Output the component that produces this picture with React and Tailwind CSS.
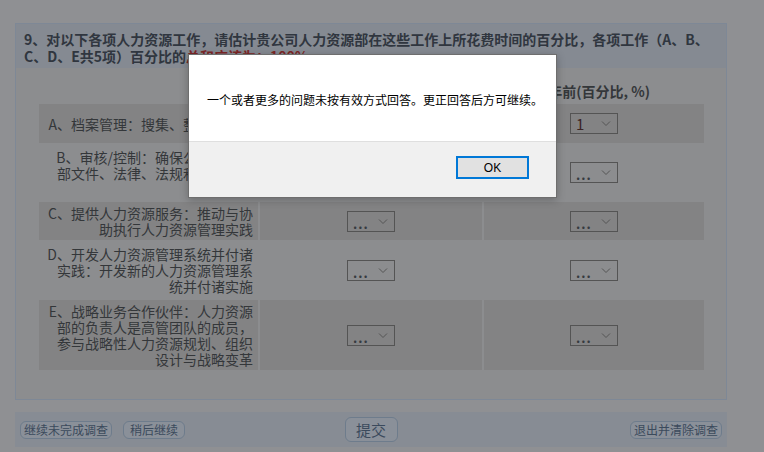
import React from "react";

const font = { fontFamily: '"Noto Sans CJK SC", "Liberation Sans", sans-serif' };

function Sel({ value = "...", red = false }) {
  return (
    <div className="relative w-[48px] h-[21px] border border-[#545454] flex items-end">
      <span
        className={
          red
            ? "pl-[5px] pb-[1px] text-[15px] leading-[17px] text-[#3b2424]"
            : "pl-[5px] pb-[0px] text-[13px] leading-[14px] text-[#353a40] font-bold tracking-[1px]"
        }
      >
        {value}
      </span>
      <svg className="absolute right-[6px] top-[6px]" width="10" height="7" viewBox="0 0 10 7">
        <path d="M1 1.5 L5 5.5 L9 1.5" fill="none" stroke="#555" strokeWidth="1" />
      </svg>
    </div>
  );
}

function Row({ h, shaded, lines, a = false }) {
  const bg = shaded ? "bg-[#838384]" : "bg-transparent";
  return (
    <div className={`grid grid-cols-[219px_222px_220px] gap-x-[2px] ${h}`}>
      <div className={`${bg} flex items-center justify-end pr-[5px]`}>
        <div className="text-right text-[14px] leading-[16px] text-[#34373a]">
          {lines.map((l, i) => (
            <div key={i} className="whitespace-nowrap">{l}</div>
          ))}
        </div>
      </div>
      <div className={`${bg} flex items-center justify-center`}>
        <Sel />
      </div>
      <div className={`${bg} flex items-center justify-center`}>
        {a ? <Sel value="1" red /> : <Sel />}
      </div>
    </div>
  );
}

function Btn({ children, w }) {
  return (
    <div
      className={`${w} h-[18px] rounded-[6px] border border-[#6e7c8c] bg-[#8a9099] flex items-center justify-center text-[12px] leading-[12px] text-[#3b4a5c]`}
    >
      {children}
    </div>
  );
}

export default function App() {
  return (
    <div className="relative w-[764px] h-[452px] overflow-hidden bg-[#8f9093]" style={font}>
      <div className="pt-[23px] pl-[15px]">
        <div className="w-[712px] h-[377px] border border-[#7e8896] bg-[#8c8d8f] flex flex-col">
          <div className="h-[44px] bg-[#858a92] px-[8px] pt-[7px] text-[14px] leading-[17px] font-bold text-[#30363f]">
            <div className="whitespace-nowrap">
              9、对以下各项人力资源工作，请估计贵公司人力资源部在这些工作上所花费时间的百分比，各项工作（A、B、
            </div>
            <div className="whitespace-nowrap">
              C、D、E共5项）百分比的<span className="text-[#7d2626]">总和应该为：100%</span>
            </div>
          </div>
          <div className="pl-[23px] pt-[15px]">
            <div className="grid grid-cols-[219px_222px_220px] gap-x-[2px] h-[21px] text-[14px] leading-[16px] font-bold text-[#34373a]">
              <div></div>
              <div className="text-center whitespace-nowrap">目前(百分比, %)</div>
              <div className="text-center whitespace-nowrap pl-[2px]">3年前(百分比, %)</div>
            </div>
            <Row h="h-[39px]" shaded a lines={["A、档案管理：搜集、整理及存档"]} />
            <Row
              h="h-[59px]"
              lines={["B、审核/控制：确保公司遵守内", "部文件、法律、法规和制度要求", "等规定"]}
            />
            <Row h="h-[38px]" shaded lines={["C、提供人力资源服务：推动与协", "助执行人力资源管理实践"]} />
            <Row
              h="h-[60px]"
              lines={["D、开发人力资源管理系统并付诸", "实践：开发新的人力资源管理系", "统并付诸实施"]}
            />
            <Row
              h="h-[70px]"
              shaded
              lines={[
                "E、战略业务合作伙伴：人力资源",
                "部的负责人是高管团队的成员，",
                "参与战略性人力资源规划、组织",
                "设计与战略变革",
              ]}
            />
          </div>
        </div>
        <div className="mt-[12px] w-[712px] h-[35px] bg-[#878c94] flex items-center px-[5px]">
          <div className="flex-1 flex items-center gap-[11px]">
            <Btn w="w-[92px]">继续未完成调查</Btn>
            <Btn w="w-[62px]">稍后继续</Btn>
          </div>
          <div className="w-[53px] h-[25px] rounded-[6px] border border-[#6e7c8c] bg-[#8a9099] flex items-center justify-center text-[15px] leading-[15px] text-[#3b4a5c] mt-[-1px]">
            提交
          </div>
          <div className="flex-1 flex items-center justify-end">
            <Btn w="w-[92px]">退出并清除调查</Btn>
          </div>
        </div>
      </div>

      <div className="absolute left-[188px] top-[54px] w-[369px] h-[144px] border border-[#6e6e6e] bg-white flex flex-col shadow-[0_2px_8px_rgba(0,0,0,0.25)]">
        <div className="h-[86px] flex items-center pl-[18px] pt-[3px] text-[12px] text-black whitespace-nowrap">
          一个或者更多的问题未按有效方式回答。更正回答后方可继续。
        </div>
        <div className="flex-1 bg-[#f0f0f0] border-t border-[#dfdfdf] flex items-start justify-end pr-[27px] pt-[14px]">
          <div className="w-[73px] h-[23px] border-2 border-[#0078d7] bg-[#e1e1e1] flex items-center justify-center text-[12px] text-black" style={{ fontFamily: '"Liberation Sans", sans-serif' }}>
            OK
          </div>
        </div>
      </div>
    </div>
  );
}
